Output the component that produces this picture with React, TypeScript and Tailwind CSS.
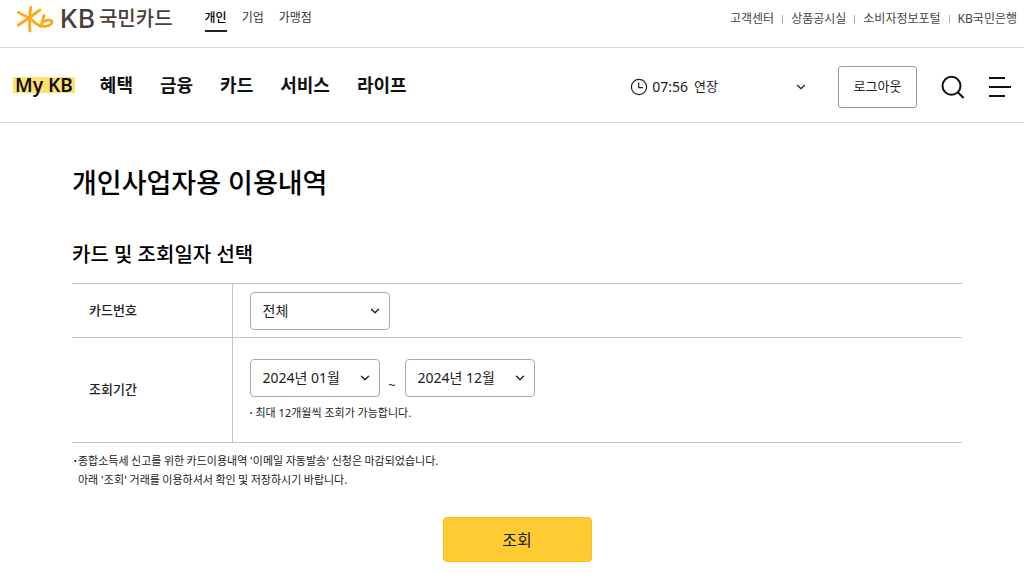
import type { SelectHTMLAttributes } from 'react'
import { ChevronDown } from 'lucide-react'
import clsx from 'clsx'

const segments = ['개인', '기업', '가맹점']
const utilLinks = ['고객센터', '상품공시실', '소비자정보포털', 'KB국민은행']
const menus = ['혜택', '금융', '카드', '서비스', '라이프']
const months = Array.from({ length: 12 }, (_, i) => `2024년 ${String(i + 1).padStart(2, '0')}월`)

function Logo() {
  return (
    <a href="#" aria-label="KB국민카드" className="flex items-center text-[#4a4038]">
      <svg viewBox="0 0 38 28" className="h-7 w-[38px]" fill="none" stroke="#fcaa1a" strokeWidth="2.8" strokeLinecap="round" strokeLinejoin="round">
        <path d="M2.4 7.4C6 9.4 10 11.6 14.2 13.6" />
        <path d="M14.8 2.4C13.6 9 13.2 18 14 26" />
        <path d="M24 5C17 9.8 9.5 15.6 2.2 20.2" />
        <path d="M14.2 13.6C17.5 16.6 20.6 19.2 24.4 21.4" />
        <path d="M28 10.4C27 13.8 26 17.4 25.2 21C29.6 22.2 35.6 20.4 36 17.2C36 14.4 30.4 14.6 26.8 17" />
      </svg>
      <span className="ml-1.5 font-[Inter,sans-serif] text-[26px] leading-7 font-medium">KB</span>
      <span className="ml-1 text-xl leading-7 font-medium">국민카드</span>
    </a>
  )
}

function TopBar() {
  return (
    <div className="flex h-12 items-start justify-between border-b border-[#d9d9d9] pt-[5px] pr-[7px] pl-4">
      <div className="flex items-start">
        <Logo />
        <nav className="ml-8 flex gap-[15px] pt-[3px] text-xs leading-5">
          {segments.map((name, i) => (
            <a
              key={name}
              href="#"
              className={clsx('pb-0.5', i === 0 ? 'border-b-2 border-[#222] font-medium text-black' : 'text-[#333]')}
            >
              {name}
            </a>
          ))}
        </nav>
      </div>
      <ul className="flex items-center pt-1 text-xs leading-5 text-[#444]">
        {utilLinks.map((name, i) => (
          <li key={name} className="flex items-center">
            {i > 0 && <span className="mx-2 h-2 w-px bg-[#aaa]" />}
            <a href="#">{name}</a>
          </li>
        ))}
      </ul>
    </div>
  )
}

function MainNav() {
  return (
    <div className="flex h-[75px] items-center justify-between border-b border-[#d9d9d9] pt-1 pr-3 pl-[13px]">
      <nav className="flex items-center gap-[27px] pb-1 text-lg leading-6 font-semibold text-[#111]">
        <a href="#" className="-mr-0.5 bg-[#ffe270] px-0.5 text-[19px] leading-4">My KB</a>
        {menus.map(name => (
          <a key={name} href="#">{name}</a>
        ))}
      </nav>
      <div className="flex items-center text-[#222]">
        <svg viewBox="0 0 18 18" className="size-[18px]" fill="none" stroke="currentColor" strokeWidth="1.2">
          <circle cx="9" cy="9" r="7.6" />
          <path d="M8.7 4.5V9.6H13" />
        </svg>
        <span className="ml-1 text-sm">07:56</span>
        <button type="button" className="ml-1.5 text-[13px]">연장</button>
        <button type="button" aria-label="펼치기" className="ml-[76px] p-0">
          <ChevronDown className="size-3.5" strokeWidth={2} />
        </button>
        <button type="button" className="ml-[30px] h-[42px] w-[79px] rounded-[3px] border border-[#999] text-[13px]">
          로그아웃
        </button>
        <button type="button" aria-label="검색" className="ml-6">
          <svg viewBox="0 0 24 24" className="size-6" fill="none" stroke="#111" strokeWidth="2">
            <circle cx="10.5" cy="10.8" r="9" />
            <path d="M16.8 17.2L22.6 23" />
          </svg>
        </button>
        <button type="button" aria-label="전체메뉴" className="ml-[23px]">
          <svg viewBox="0 0 24 24" className="size-6" fill="none" stroke="#111" strokeWidth="2">
            <path d="M1 3H17M1 12H23M1 21H17" />
          </svg>
        </button>
      </div>
    </div>
  )
}

function Select({ options, className, ...props }: SelectHTMLAttributes<HTMLSelectElement> & { options: string[] }) {
  return (
    <span className={clsx('relative inline-block', className)}>
      <select {...props} className="h-[38px] w-full appearance-none rounded border border-[#aaa] bg-white pl-3 text-sm text-[#222]">
        {options.map(o => (
          <option key={o}>{o}</option>
        ))}
      </select>
      <ChevronDown className="pointer-events-none absolute top-3 right-2 size-3.5" strokeWidth={2.4} />
    </span>
  )
}

export default function App() {
  return (
    <div className="min-h-screen bg-white font-['Noto_Sans','Noto_Sans_CJK_KR',sans-serif] text-[#222]">
      <header>
        <TopBar />
        <MainNav />
      </header>

      <main className="pr-[62px] pl-[72px]">
        <h1 className="pt-10 text-[27px] leading-10 font-medium text-black">개인사업자용 이용내역</h1>
        <h2 className="pt-9 text-xl leading-8 font-medium text-black">카드 및 조회일자 선택</h2>

        <form onSubmit={e => e.preventDefault()}>
          <table className="mt-3 w-full border-y border-[#c4c4c4] text-left text-[13px]">
            <tbody>
              <tr className="h-[54px] border-b border-[#c4c4c4]">
                <th className="w-[160px] border-r border-[#c4c4c4] pl-[17px] font-medium">
                  <label htmlFor="card">카드번호</label>
                </th>
                <td className="pl-[17px]">
                  <Select id="card" options={['전체']} className="block w-[140px]" />
                </td>
              </tr>
              <tr className="h-[105px]">
                <th className="border-r border-[#c4c4c4] pl-[17px] font-medium">
                  <label htmlFor="from">조회기간</label>
                </th>
                <td className="pl-[17px]">
                  <div className="flex items-center">
                    <Select id="from" options={months} defaultValue={months[0]} className="w-[130px]" />
                    <span className="w-[25px] pt-4 text-center">~</span>
                    <Select aria-label="조회 종료월" options={months} defaultValue={months[11]} className="w-[130px]" />
                  </div>
                  <p className="mt-2 flex text-[11px] leading-4">
                    <span className="w-1.5 font-bold">·</span>최대 12개월씩 조회가 가능합니다.
                  </p>
                </td>
              </tr>
            </tbody>
          </table>

          <div className="flex pt-2 font-['Noto_Sans_CJK_KR',sans-serif] text-[11px] leading-[19px]">
            <span className="w-1.5 font-bold">·</span>
            <p>
              종합소득세 신고를 위한 카드이용내역 '이메일 자동발송' 신청은 마감되었습니다.
              <br />
              아래 '조회' 거래를 이용하셔서 확인 및 저장하시기 바랍니다.
            </p>
          </div>

          <button
            type="submit"
            className="mx-auto mt-7 block h-[45px] w-[149px] rounded border border-[#fbbf1d] bg-[#ffcb32] text-base text-[#222]"
          >
            조회
          </button>
        </form>
      </main>
    </div>
  )
}
